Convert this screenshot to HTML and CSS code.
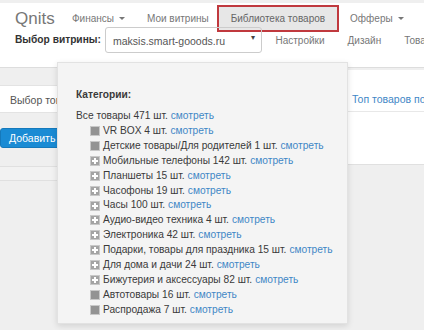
FILE: index.html
```html
<!DOCTYPE html>
<html lang="ru">
<head>
  <meta charset="UTF-8">
  <title>Qnits - Библиотека товаров</title>
  <link rel="stylesheet" href="styles.css">
</head>
<body>
  <nav class="navbar">
    <div class="nav-row">
      <a class="brand" href="#">Qnits</a>
      <ul class="nav">
        <li><a href="#">Финансы <span class="caret"></span></a></li>
        <li><a href="#">Мои витрины</a></li>
        <li class="active"><a href="#">Библиотека товаров</a></li>
        <li><a href="#">Офферы <span class="caret"></span></a></li>
      </ul>
    </div>
    <div class="nav-row sub">
      <label class="shop-label">Выбор витрины:</label>
      <div class="shop-select">maksis.smart-gooods.ru <span class="select-arrow">&#9662;</span></div>
      <ul class="nav sub-nav">
        <li><a href="#">Настройки</a></li>
        <li><a href="#">Дизайн</a></li>
        <li><a href="#">Товары</a></li>
      </ul>
    </div>
  </nav>

  <main class="content">
    <div class="left-col">
      <div class="product-input">Выбор товара из библиотеки</div>
      <button class="btn-add">Добавить товар</button>
      <div class="table-head"></div>
    </div>
    <div class="right-col">
      <div class="panel">
        <div class="panel-heading"><a href="#">Топ товаров по продажам</a></div>
        <div class="panel-body"></div>
      </div>
    </div>
  </main>

  <!-- Library dropdown, opened over the page -->
  <div class="library-menu">
    <h4>Категории:</h4>
    <ul class="tree">
      <li class="root">Все товары 471 шт. <a href="#">смотреть</a></li>
      <li><span class="node leaf"></span>VR BOX 4 шт. <a href="#">смотреть</a></li>
      <li><span class="node leaf"></span>Детские товары/Для родителей 1 шт. <a href="#">смотреть</a></li>
      <li><span class="node plus"></span>Мобильные телефоны 142 шт. <a href="#">смотреть</a></li>
      <li><span class="node plus"></span>Планшеты 15 шт. <a href="#">смотреть</a></li>
      <li><span class="node plus"></span>Часофоны 19 шт. <a href="#">смотреть</a></li>
      <li><span class="node plus"></span>Часы 100 шт. <a href="#">смотреть</a></li>
      <li><span class="node plus"></span>Аудио-видео техника 4 шт. <a href="#">смотреть</a></li>
      <li><span class="node plus"></span>Электроника 42 шт. <a href="#">смотреть</a></li>
      <li><span class="node plus"></span>Подарки, товары для праздника 15 шт. <a href="#">смотреть</a></li>
      <li><span class="node plus"></span>Для дома и дачи 24 шт. <a href="#">смотреть</a></li>
      <li><span class="node plus"></span>Бижутерия и аксессуары 82 шт. <a href="#">смотреть</a></li>
      <li><span class="node leaf"></span>Автотовары 16 шт. <a href="#">смотреть</a></li>
      <li><span class="node leaf"></span>Распродажа 7 шт. <a href="#">смотреть</a></li>
    </ul>
  </div>
</body>
</html>
```

FILE: styles.css
```css
* {
  margin: 0;
  padding: 0;
  box-sizing: border-box;
}

body {
  background-color: #efefef;
  color: #3a3a3a;
  font-family: "Liberation Sans", Arial, sans-serif;
  font-size: 10.2px;
  line-height: 1.4;
  overflow: hidden;
  padding-top: 3px;
}

a {
  color: #3f87c6;
  text-decoration: none;
}

ul {
  list-style: none;
}

/* Top navigation */
.navbar {
  background-color: #fff;
  border-bottom: 1px solid #ddd;
  padding: 2px 0 13px 15px;
  white-space: nowrap;
  overflow: hidden;
}

.nav-row {
  display: flex;
  align-items: center;
  height: 27px;
}

.nav-row > * {
  flex-shrink: 0;
}

.nav-row.sub {
  margin-top: -5px;
}

.brand {
  color: #777;
  font-size: 17px;
  width: 46px;
}

.nav {
  display: flex;
  height: 100%;
}

.nav li a {
  display: flex;
  align-items: center;
  height: 100%;
  padding: 0 11px;
  color: #777;
  font-size: 10px;
}

.nav li.active {
  margin-left: -3px;
}

.nav li.active a {
  background-color: #e7e7e7;
  border: 2px solid #c0393e;
  padding: 0 12px;
  color: #666;
}

.caret {
  display: inline-block;
  margin-left: 5px;
  border-top: 3px solid #777;
  border-left: 3px solid transparent;
  border-right: 3px solid transparent;
}

.shop-label {
  font-weight: 700;
  color: #333;
  width: 90px;
}

.shop-select {
  width: 157px;
  height: 26px;
  margin-top: -1px;
  border: 1px solid #ccc;
  border-radius: 3px;
  padding: 6px 7px;
  color: #555;
  font-size: 10.5px;
  position: relative;
}

.select-arrow {
  position: absolute;
  right: 6px;
  top: 4px;
  font-size: 8px;
  color: #444;
}

.sub-nav {
  margin-left: 2px;
}

.sub-nav li a {
  padding: 0 11.5px;
}

/* Page content */
.content {
  display: grid;
  grid-template-columns: 338px 1fr;
  gap: 8px;
}

.left-col {
  padding-top: 17px;
}

.product-input {
  background-color: #fff;
  border: 1px solid #e3e3e3;
  border-left: none;
  height: 28px;
  padding: 7px 10px;
  color: #555;
  font-size: 10.5px;
  white-space: nowrap;
}

.btn-add {
  display: block;
  margin-top: 15px;
  height: 20px;
  padding: 0 8px;
  background-color: #1a8bd4;
  border: 1px solid #1579bb;
  border-radius: 3px;
  color: #fff;
  font-family: inherit;
  font-size: 10.5px;
}

.table-head {
  margin-top: 18px;
  height: 15px;
  background-color: #f2f2f2;
  border: 1px solid #e0e0e0;
  border-left: none;
}

.right-col {
  padding-top: 2px;
}

.panel {
  background-color: #fff;
  border-bottom: 1px solid #e0e0e0;
}

.panel-heading {
  height: 42px;
  padding: 22px 6px 0;
  border-bottom: 1px solid #e8e8e8;
  font-size: 10.5px;
  white-space: nowrap;
  overflow: hidden;
}

.panel-body {
  height: 52px;
}

/* Dropdown with product categories */
.library-menu {
  position: absolute;
  left: 57px;
  top: 62px;
  width: 291px;
  height: 262px;
  background-color: #f4f4f4;
  border: 1px solid #e2e2e2;
  box-shadow: 0 2px 6px rgba(0, 0, 0, 0.12);
  padding: 25px 18px 0;
  white-space: nowrap;
}

.library-menu h4 {
  font-size: 10.2px;
  font-weight: 700;
  margin-bottom: 6.5px;
}

.tree li {
  display: flex;
  align-items: center;
  height: 14.9px;
  padding-left: 14px;
}

.tree li.root {
  padding-left: 0;
}

.tree a {
  margin-left: 3px;
}

.node {
  width: 10px;
  height: 10px;
  margin-right: 3px;
  position: relative;
  flex-shrink: 0;
}

.node.leaf {
  background-color: #939393;
  border: 1px solid #c8c8c8;
}

.node.plus {
  background-color: #a3a3a3;
  border: 1px solid #c8c8c8;
}

.node.plus::before,
.node.plus::after {
  content: "";
  position: absolute;
  background-color: #fff;
}

.node.plus::before {
  left: 1px;
  right: 1px;
  top: 3px;
  height: 2px;
}

.node.plus::after {
  top: 1px;
  bottom: 1px;
  left: 3px;
  width: 2px;
}
```
